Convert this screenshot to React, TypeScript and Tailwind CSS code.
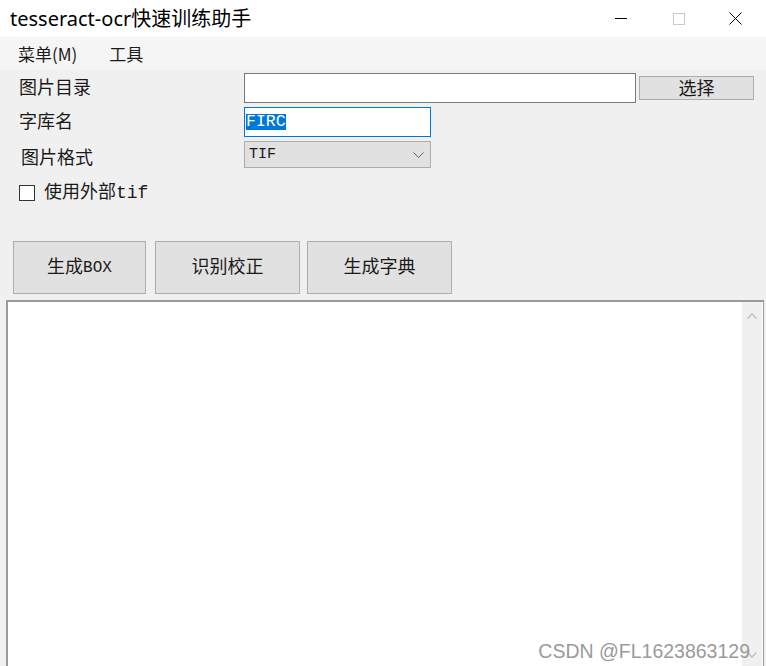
import React from 'react';

const cjk = "font-['Noto_Sans_CJK_SC',sans-serif]";
const mono = "font-['Liberation_Mono','Noto_Sans_CJK_SC',monospace]";

const Label: React.FC<{ text: string; className?: string }> = ({ text, className = '' }) => (
    <div className={`w-[244px] shrink-0 pl-[19px] text-[18px] leading-none text-[#1a1a1a] ${cjk} ${className}`}>{text}</div>
);

const ActionButton: React.FC<{ width: string; children: React.ReactNode }> = ({ width, children }) => (
    <button className={`${width} h-[53px] bg-[#e1e1e1] border border-[#adadad] flex items-center justify-center text-[18px] leading-none text-[#1a1a1a] ${mono}`}>
        {children}
    </button>
);

const App: React.FC = () => (
    <div className="relative w-[766px] h-[666px] overflow-hidden bg-[#f0f0f0] flex flex-col">
        {/* title bar */}
        <div className="h-[37px] bg-white flex items-center shrink-0">
            <span className="pl-[10px] text-[20px] leading-none text-black font-['Noto_Sans','Noto_Sans_CJK_SC',sans-serif]">
                tesseract-ocr快速训练助手
            </span>
            <div className="ml-auto flex items-center h-full">
                <div className="w-[58px] flex justify-center">
                    <div className="w-[12px] h-px bg-black" />
                </div>
                <div className="w-[58px] flex justify-center">
                    <div className="w-[12px] h-[12px] border border-[#c8c8c8]" />
                </div>
                <div className="w-[58px] flex justify-center pr-[4px]">
                    <svg width="13" height="13" viewBox="0 0 13 13">
                        <path d="M0.5 0.5 L12.5 12.5 M12.5 0.5 L0.5 12.5" stroke="#000" strokeWidth="1" />
                    </svg>
                </div>
            </div>
        </div>

        {/* menu bar */}
        <div className={`h-[33px] bg-[#f5f5f5] flex items-center gap-[32px] pl-[18px] text-[17px] leading-none text-[#1a1a1a] shrink-0 ${cjk}`}>
            <span>菜单(M)</span>
            <span>工具</span>
        </div>

        {/* form */}
        <div className="pt-[3px] shrink-0">
            <div className="flex items-center h-[30px]">
                <Label text="图片目录" className="mb-[4px]" />
                <div className="w-[392px] h-[30px] bg-white border border-[#7a7a7a]" />
                <button className={`ml-[3px] w-[115px] h-[24px] pb-[3px] bg-[#e1e1e1] border border-[#adadad] text-[18px] leading-none text-[#1a1a1a] ${cjk}`}>
                    选择
                </button>
            </div>
            <div className="flex items-center h-[30px] mt-[4px]">
                <Label text="字库名" className="mb-[4px]" />
                <div className="w-[187px] h-[30px] bg-white border border-[#0078d7] flex items-center pl-px">
                    <span className={`bg-[#0078d7] text-white text-[16.5px] leading-[16px] ${mono}`}>FIRC</span>
                </div>
            </div>
            <div className="flex items-center h-[27px] mt-[4px]">
                <Label text="图片格式" className="pl-[21px] pt-[2px]" />
                <div className="w-[187px] h-[27px] bg-[#e1e1e1] border border-[#adadad] flex items-center pl-[4px] pr-[6px]">
                    <span className={`text-[15px] leading-none text-[#1a1a1a] ${mono}`}>TIF</span>
                    <svg className="ml-auto" width="11" height="6" viewBox="0 0 11 6">
                        <path d="M0.5 0.5 L5.5 5.5 L10.5 0.5" fill="none" stroke="#606060" strokeWidth="1" />
                    </svg>
                </div>
            </div>
            <div className="flex items-center h-[17px] mt-[16px] pl-[19px]">
                <div className="w-[16px] h-[16px] bg-white border border-[#333]" />
                <span className={`ml-[9px] text-[18px] leading-none text-[#1a1a1a] ${mono}`}>使用外部tif</span>
            </div>
        </div>

        {/* action buttons */}
        <div className="flex mt-[40px] pl-[13px] shrink-0">
            <ActionButton width="w-[133px]">
                生成<span className="text-[16px]">BOX</span>
            </ActionButton>
            <div className="ml-[9px]">
                <ActionButton width="w-[145px]">识别校正</ActionButton>
            </div>
            <div className="ml-[7px]">
                <ActionButton width="w-[145px]">生成字典</ActionButton>
            </div>
        </div>

        {/* output text area */}
        <div className="flex-1 mt-[6px] ml-[6px] mr-[2px] bg-white border-t-2 border-l-2 border-r border-[#9a9a9a] flex">
            <div className="flex-1" />
            <div className="w-[20px] bg-[#f0f0f0] flex flex-col items-center pt-[11px] mr-px">
                <svg width="10" height="6" viewBox="0 0 10 6">
                    <path d="M0.5 5.5 L5 1 L9.5 5.5" fill="none" stroke="#c2c2c2" strokeWidth="1.5" />
                </svg>
                <svg className="mt-auto mb-[8px]" width="10" height="6" viewBox="0 0 10 6">
                    <path d="M0.5 0.5 L5 5 L9.5 0.5" fill="none" stroke="#c2c2c2" strokeWidth="1.5" />
                </svg>
            </div>
        </div>

        {/* watermark */}
        <span className="absolute right-[16px] bottom-[5px] text-[19.5px] leading-none text-[#9a9a9a] font-['Liberation_Sans',sans-serif]">
            CSDN @FL1623863129
        </span>
    </div>
);

export default App;
